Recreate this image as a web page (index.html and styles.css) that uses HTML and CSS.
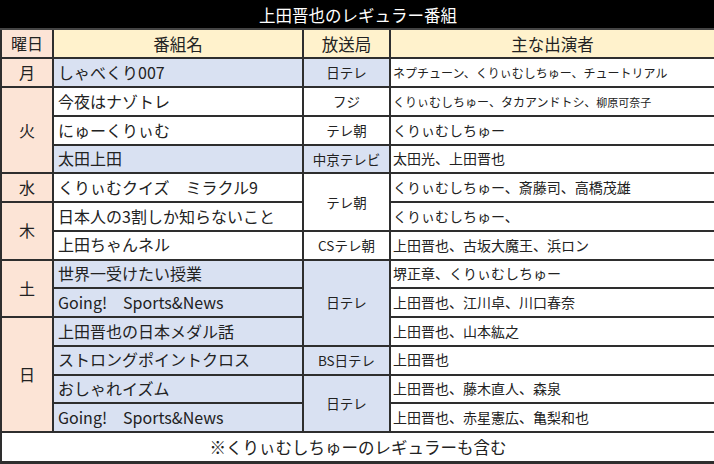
FILE: index.html
```html
<!DOCTYPE html>
<html lang="ja">
<head>
<meta charset="utf-8">
<link rel="stylesheet" href="styles.css">
</head>
<body>
<table class="sched">
  <colgroup>
    <col class="c-day"><col class="c-prog"><col class="c-st"><col class="c-cast">
  </colgroup>
  <tr class="title"><td colspan="4">上田晋也のレギュラー番組</td></tr>
  <tr class="head">
    <td class="day">曜日</td><td class="hd">番組名</td><td class="hd">放送局</td><td class="hd">主な出演者</td>
  </tr>
  <tr>
    <td class="day">月</td><td class="prog blue">しゃべくり007</td><td class="st blue">日テレ</td><td class="cast sm">ネプチューン、くりぃむしちゅー、チュートリアル</td>
  </tr>
  <tr>
    <td class="day" rowspan="3">火</td><td class="prog">今夜はナゾトレ</td><td class="st">フジ</td><td class="cast sm">くりぃむしちゅー、タカアンドトシ、<span class="xs">柳原可奈子</span></td>
  </tr>
  <tr>
    <td class="prog">にゅーくりぃむ</td><td class="st">テレ朝</td><td class="cast">くりぃむしちゅー</td>
  </tr>
  <tr>
    <td class="prog blue">太田上田</td><td class="st blue">中京テレビ</td><td class="cast">太田光、上田晋也</td>
  </tr>
  <tr>
    <td class="day">水</td><td class="prog">くりぃむクイズ　ミラクル9</td><td class="st" rowspan="2">テレ朝</td><td class="cast">くりぃむしちゅー、斎藤司、高橋茂雄</td>
  </tr>
  <tr>
    <td class="day" rowspan="2">木</td><td class="prog">日本人の3割しか知らないこと</td><td class="cast">くりぃむしちゅー、</td>
  </tr>
  <tr>
    <td class="prog">上田ちゃんネル</td><td class="st">CSテレ朝</td><td class="cast">上田晋也、古坂大魔王、浜ロン</td>
  </tr>
  <tr>
    <td class="day" rowspan="2">土</td><td class="prog blue">世界一受けたい授業</td><td class="st blue" rowspan="3">日テレ</td><td class="cast">堺正章、くりぃむしちゅー</td>
  </tr>
  <tr>
    <td class="prog blue">Going!　Sports&amp;News</td><td class="cast">上田晋也、江川卓、川口春奈</td>
  </tr>
  <tr>
    <td class="day" rowspan="4">日</td><td class="prog blue">上田晋也の日本メダル話</td><td class="cast">上田晋也、山本紘之</td>
  </tr>
  <tr>
    <td class="prog blue">ストロングポイントクロス</td><td class="st blue">BS日テレ</td><td class="cast">上田晋也</td>
  </tr>
  <tr>
    <td class="prog blue">おしゃれイズム</td><td class="st blue" rowspan="2">日テレ</td><td class="cast">上田晋也、藤木直人、森泉</td>
  </tr>
  <tr>
    <td class="prog blue">Going!　Sports&amp;News</td><td class="cast">上田晋也、赤星憲広、亀梨和也</td>
  </tr>
  <tr class="foot"><td colspan="4">※くりぃむしちゅーのレギュラーも含む</td></tr>
</table>
</body>
</html>
```

FILE: styles.css
```css
html, body {
  margin: 0;
  padding: 0;
  background: #ffffff;
}

.sched {
  width: 714px;
  height: 464px;
  table-layout: fixed;
  border-collapse: collapse;
  font-family: "Noto Sans CJK JP", "Noto Sans", sans-serif;
  color: #222222;
}

.c-day { width: 52px; }
.c-prog { width: 250px; }
.c-st { width: 87px; }
.c-cast { width: 325px; }

.sched td {
  border: 2px solid #2e2e2e;
  padding: 0;
  line-height: 1.1;
  vertical-align: middle;
  white-space: nowrap;
  overflow: hidden;
  height: 25px;
}

.sched .title td {
  background: #000000;
  color: #ffffff;
  text-align: center;
  font-size: 16.5px;
  height: 24px;
  border-color: #000000;
  border-bottom-color: #444444;
}

.sched .head td {
  height: 26px;
}

.sched td.day {
  background: #fce4d6;
  text-align: center;
  font-size: 16px;
}

.sched td.hd {
  background: #fff2cc;
  text-align: center;
  font-size: 16.5px;
}

.sched td.prog {
  font-size: 16px;
  padding-left: 4px;
}

.sched td.st {
  text-align: center;
  font-size: 13.5px;
}

.sched td.cast {
  font-size: 14px;
  padding-left: 2px;
}

.sched td.cast.sm {
  font-size: 12px;
}

.xs {
  font-size: 11px;
}

.sched td.blue {
  background: #d9e1f2;
}

.sched .foot td {
  text-align: center;
  font-size: 16.5px;
  height: 26px;
  border-bottom-width: 3px;
}
```
